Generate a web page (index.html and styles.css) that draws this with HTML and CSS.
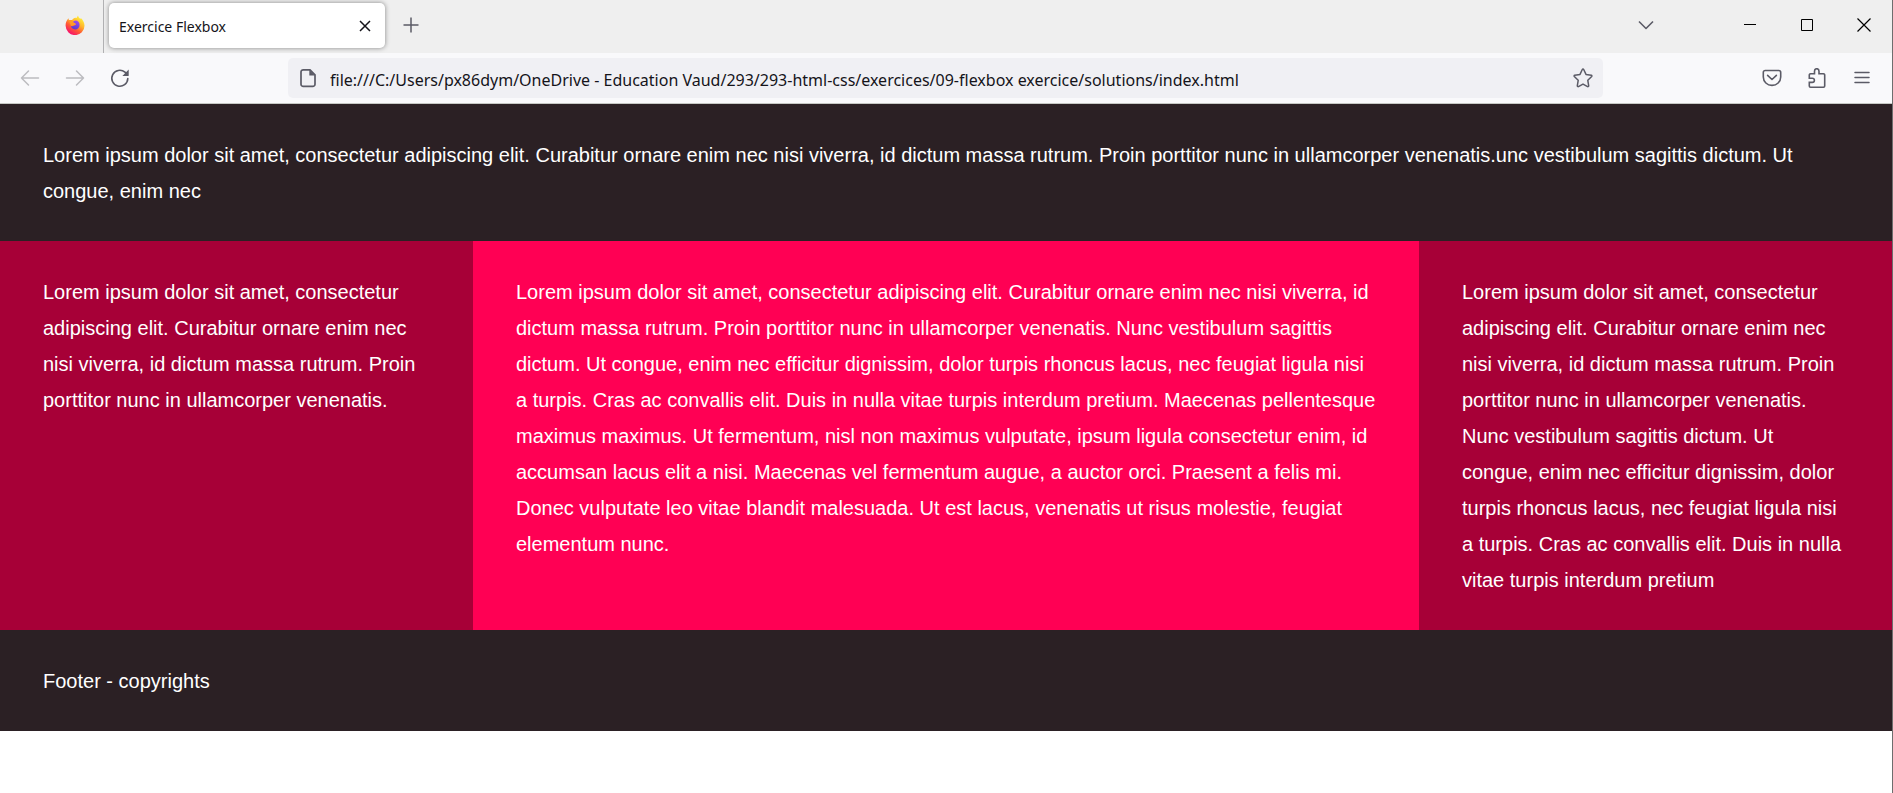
FILE: index.html
```html
<!DOCTYPE html>
<html lang="fr">
<head>
<meta charset="utf-8">
<title>Exercice Flexbox</title>
<link rel="stylesheet" href="styles.css">
</head>
<body>
<div class="window">
  <div class="tabbar">
    <button class="pinned" aria-label="Firefox View">
      <svg width="20" height="20" viewBox="0 0 20 20">
        <defs>
          <linearGradient id="flame" x1="0.8" y1="0.1" x2="0.25" y2="0.95">
            <stop offset="0" stop-color="#fff13c"/>
            <stop offset="0.35" stop-color="#ffb52c"/>
            <stop offset="0.65" stop-color="#ff5a34"/>
            <stop offset="1" stop-color="#f50f6e"/>
          </linearGradient>
          <linearGradient id="globe" x1="0.7" y1="0" x2="0.3" y2="1">
            <stop offset="0" stop-color="#a14af0"/>
            <stop offset="1" stop-color="#4d3ad0"/>
          </linearGradient>
        </defs>
        <path fill="url(#flame)" d="M13 .4c.3 1.6 1.2 2.5 2.6 3.5l.1-1c1.900 1.500 3.800 4.300 3.800 7.600a9.400 9.400 0 0 1-18.900.3C.5 8.300 1.300 5.500 3.500 3.200l.4 2C5 4.800 6 4.800 7 5.100 8 3.700 9 3 10.300 2.800l1.200.3z"/>
        <path fill="url(#globe)" d="M8.500 6.200c2.800-1.800 6.100.2 6.100 3.700 0 2.700-2 4.500-4.500 4.500-2.200 0-4-1.500-4.200-3.600 1.100.8 2.300.6 3.300-.2.800-.7 2-.4 1.700-1.300-.4-.6-1.700-.4-2.300-1.100-.5-.5-.6-1.300-.1-2z"/>
        <path fill="#ff9b26" d="M4 5.200c1-.4 2.200-.4 3.200 0 .7.500 1.100 1.200 1 1.700.3.800 1.200 1 2.600 1.200-.2.900-1.400 1-2 1.600-.8.800-1.800 1.400-2.900 1.100z"/>
      </svg>
    </button>
    <div class="tab">
      <span class="tab-title">Exercice Flexbox</span>
      <button class="tab-close" aria-label="Fermer l’onglet">
        <svg width="12" height="12" viewBox="0 0 12 12"><path d="M1 1l10 10M11 1L1 11" stroke="#15141a" stroke-width="1.500" fill="none"/></svg>
      </button>
    </div>
    <button class="new-tab" aria-label="Nouvel onglet">
      <svg width="16" height="16" viewBox="0 0 16 16"><path d="M8 .5v15M.5 8h15" stroke="#5b5b66" stroke-width="1.500" fill="none"/></svg>
    </button>
    <button class="all-tabs" aria-label="Lister tous les onglets">
      <svg width="16" height="16" viewBox="0 0 16 16"><path d="M1 4.500l7 7 7-7" stroke="#5b5b66" stroke-width="1.600" fill="none" stroke-linejoin="round"/></svg>
    </button>
    <button class="caption" aria-label="Réduire">
      <svg width="14" height="14" viewBox="0 0 14 14"><path d="M1 6.500h12" stroke="#000"/></svg>
    </button>
    <button class="caption" aria-label="Agrandir">
      <svg width="14" height="14" viewBox="0 0 14 14"><path d="M1.500 1.500h11v11h-11z" stroke="#000" fill="none"/></svg>
    </button>
    <button class="caption" aria-label="Fermer">
      <svg width="14" height="14" viewBox="0 0 14 14"><path d="M.5.5l13 13M13.500.5l-13 13" stroke="#000" stroke-width="1.200" fill="none"/></svg>
    </button>
  </div>

  <div class="toolbar">
    <button class="tool" aria-label="Précédent" disabled>
      <svg width="20" height="20" viewBox="0 0 20 20"><path d="M18.500 10h-17M8.500 3l-7 7 7 7" stroke="#bcbcc0" stroke-width="1.500" fill="none" stroke-linecap="round" stroke-linejoin="round"/></svg>
    </button>
    <button class="tool" aria-label="Suivant" disabled>
      <svg width="20" height="20" viewBox="0 0 20 20"><path d="M1.500 10h17M11.500 3l7 7-7 7" stroke="#bcbcc0" stroke-width="1.500" fill="none" stroke-linecap="round" stroke-linejoin="round"/></svg>
    </button>
    <button class="tool" aria-label="Actualiser">
      <svg width="20" height="20" viewBox="0 0 20 20"><path d="M17.800 10.500a8 8 0 1 1-2.800-6.300l1.200 1.300" stroke="#5b5b66" stroke-width="1.600" fill="none" stroke-linecap="round"/><path d="M18.700 1.600v5.800a.6.600 0 0 1-.6.600h-5.700z" fill="#5b5b66"/></svg>
    </button>
    <div class="spring"></div>
    <div class="urlbar">
      <svg class="page-icon" width="16" height="20" viewBox="0 0 16 20"><path d="M10 1.800H3.200A2.200 2.200 0 0 0 1 4v12.200a2.200 2.200 0 0 0 2.200 2.200h9.600a2.200 2.200 0 0 0 2.200-2.200V6.800z" stroke="#5b5b66" stroke-width="1.700" fill="none"/><path d="M9.300 1.800v5.700h5.700z" fill="#5b5b66"/></svg>
      <input class="url" type="text" aria-label="Adresse" value="file:///C:/Users/px86dym/OneDrive - Education Vaud/293/293-html-css/exercices/09-flexbox exercice/solutions/index.html">
      <button class="star" aria-label="Marquer cette page">
        <svg width="20" height="20" viewBox="0 0 20 20"><path d="M9.300 1.500a.8.800 0 0 1 1.400 0l2.300 4.900 5.300.8a.8.800 0 0 1 .4 1.300l-3.900 3.800.9 5.500a.8.800 0 0 1-1.100.8L10 16.100l-4.600 2.500a.8.800 0 0 1-1.100-.8l.9-5.500-3.900-3.800a.8.800 0 0 1 .4-1.300L7 6.400z" stroke="#5b5b66" stroke-width="1.500" fill="none" stroke-linejoin="round"/></svg>
      </button>
    </div>
    <div class="spring"></div>
    <button class="tool" aria-label="Pocket">
      <svg width="20" height="20" viewBox="0 0 20 20"><path d="M3.200 2.500h13.600a1.900 1.900 0 0 1 1.900 1.900v4.700a8.700 8.300 0 0 1-17.400 0V4.400a1.900 1.900 0 0 1 1.900-1.900z" stroke="#5b5b66" stroke-width="1.600" fill="none"/><path d="M5.600 7.300l4.400 4.200 4.400-4.200" stroke="#5b5b66" stroke-width="1.600" fill="none" stroke-linecap="round" stroke-linejoin="round"/></svg>
    </button>
    <button class="tool" aria-label="Extensions">
      <svg width="20" height="20" viewBox="0 0 20 20"><path d="M3.500 5.800h4V3.200a2 2.200 0 0 1 4.500 0v2.600h4.500a1.200 1.200 0 0 1 1.200 1.200v11a1.200 1.200 0 0 1-1.200 1.200h-13A1.200 1.200 0 0 1 2.300 18v-3.600h3a2 2 0 0 0 0-4.200h-3V7a1.200 1.200 0 0 1 1.200-1.200z" stroke="#5b5b66" stroke-width="1.600" fill="none"/></svg>
    </button>
    <button class="tool" aria-label="Menu">
      <svg width="20" height="20" viewBox="0 0 20 20"><path d="M3 4.500h14M3 9.500h14M3 14.500h14" stroke="#5b5b66" stroke-width="1.500" stroke-linecap="round"/></svg>
    </button>
  </div>

  <div class="page">
    <header class="band">Lorem ipsum dolor sit amet, consectetur adipiscing elit. Curabitur ornare enim nec nisi viverra, id dictum massa rutrum. Proin porttitor nunc in ullamcorper venenatis.unc vestibulum sagittis dictum. Ut congue, enim nec</header>
    <div class="columns">
      <aside class="side">Lorem ipsum dolor sit amet, consectetur adipiscing elit. Curabitur ornare enim nec nisi viverra, id dictum massa rutrum. Proin porttitor nunc in ullamcorper venenatis.</aside>
      <main class="main">Lorem ipsum dolor sit amet, consectetur adipiscing elit. Curabitur ornare enim nec nisi viverra, id dictum massa rutrum. Proin porttitor nunc in ullamcorper venenatis. Nunc vestibulum sagittis dictum. Ut congue, enim nec efficitur dignissim, dolor turpis rhoncus lacus, nec feugiat ligula nisi a turpis. Cras ac convallis elit. Duis in nulla vitae turpis interdum pretium. Maecenas pellentesque maximus maximus. Ut fermentum, nisl non maximus vulputate, ipsum ligula consectetur enim, id accumsan lacus elit a nisi. Maecenas vel fermentum augue, a auctor orci. Praesent a felis mi. Donec vulputate leo vitae blandit malesuada. Ut est lacus, venenatis ut risus molestie, feugiat elementum nunc.</main>
      <aside class="side">Lorem ipsum dolor sit amet, consectetur adipiscing elit. Curabitur ornare enim nec nisi viverra, id dictum massa rutrum. Proin porttitor nunc in ullamcorper venenatis. Nunc vestibulum sagittis dictum. Ut congue, enim nec efficitur dignissim, dolor turpis rhoncus lacus, nec feugiat ligula nisi a turpis. Cras ac convallis elit. Duis in nulla vitae turpis interdum pretium</aside>
    </div>
    <footer class="band">Footer - copyrights</footer>
  </div>
</div>
</body>
</html>
```

FILE: styles.css
```css
* {
  box-sizing: border-box;
}

body {
  margin: 0;
  background: #fff;
}

button {
  display: flex;
  align-items: center;
  justify-content: center;
  flex: none;
  margin: 0;
  padding: 0;
  border: 0;
  background: none;
}

svg {
  display: block;
  flex: none;
}

.window {
  min-height: 100vh;
  border-right: 1px solid #6e6e6e;
}

/* Tab strip */
.tabbar {
  display: flex;
  height: 53px;
  padding-bottom: 3px;
  background: #efefef;
}

.pinned {
  width: 104px;
  margin-bottom: -3px;
  padding: 0 0 3px 46px;
  border-right: 1px solid #b1b1b3;
}

.tab {
  display: flex;
  align-items: center;
  width: 276px;
  height: 45px;
  margin: 3px 8px 0 5px;
  padding: 0 9px 0 10px;
  border-radius: 5px;
  background: #fff;
  box-shadow: 0 0 5px rgba(0, 0, 0, 0.45);
  color: #15141a;
  font: 14px/20px "Noto Sans", "Open Sans", sans-serif;
}

.tab-title {
  flex: 1;
  padding-top: 2px;
}

.tab-close {
  width: 22px;
  height: 30px;
}

.new-tab {
  width: 36px;
}

.all-tabs {
  width: 45px;
  margin: 0 53px 0 auto;
}

.caption {
  width: 57px;
}

/* Navigation toolbar */
.toolbar {
  display: flex;
  align-items: center;
  height: 51px;
  padding: 0 8px 0 7px;
  border-bottom: 1px solid #c6c8c4;
  background: #f9f9fb;
}

.tool {
  width: 45px;
  height: 40px;
}

.spring {
  flex: 1;
}

.urlbar {
  display: flex;
  align-items: center;
  flex: 9;
  height: 40px;
  margin: 0 2px;
  padding: 0 7px 0 12px;
  border-radius: 5px;
  background: #f0f0f4;
}

.url {
  flex: 1;
  min-width: 0;
  height: 40px;
  margin: 0;
  padding: 3px 14px 0;
  border: 0;
  background: none;
  color: #15141a;
  font: 16px "Noto Sans", "Open Sans", sans-serif;
}

.star {
  width: 26px;
  height: 40px;
}

/* Page content */
.page {
  color: #fff;
  font: 20px/36px "Liberation Sans", Arial, sans-serif;
}

.band,
.side,
.main {
  padding: 33px 43px 32px;
}

.band {
  background: #2b2024;
}

.columns {
  display: flex;
}

.side {
  flex: none;
  width: 25%;
  background: #a70037;
}

.main {
  flex: 1;
  min-width: 0;
  background: #ff0054;
}
```
